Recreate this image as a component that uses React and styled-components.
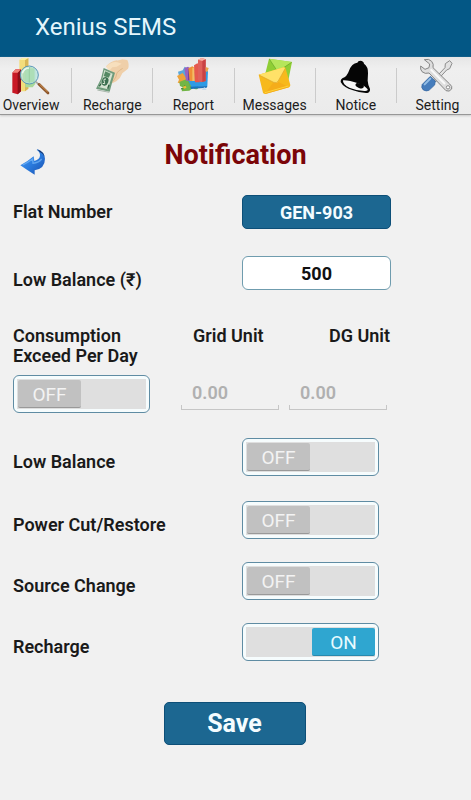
import { useState } from "react";
import styled, { createGlobalStyle } from "styled-components";

const GlobalStyle = createGlobalStyle`
    * {
        box-sizing: border-box;
    }
    body {
        margin: 0;
        min-height: 100vh;
        background-color: #f1f1f1;
        color: #1a1a1a;
        font-family: Roboto, "Noto Sans", sans-serif;
    }
    button, input {
        font-family: inherit;
    }
`
const Header = styled.header`
    display: flex;
    align-items: center;
    height: 57px;
    padding: 0 35px 4px;
    background-color: #035785;
`
const AppName = styled.span`
    color: #e4f6fc;
    font-size: 24px;
    line-height: 32px;
`
const NavBar = styled.nav`
    overflow: hidden;
    background: linear-gradient(#e6e6e6, #efefef 20%, #ebebeb);
    border-bottom: 1px solid #979797;
    box-shadow: 0 1px 2px #c9c9c9;
`
const TabList = styled.ul`
    display: flex;
    list-style: none;
    margin: 0 -7px 0 -9px;
    padding: 0;
`
const Tab = styled.li`
    display: flex;
    flex: 1 1 0;
    min-width: 0;
    align-items: center;

    &:not(:last-child)::after {
        content: "";
        width: 1px;
        height: 35px;
        background-color: #cbcbcb;
    }
`
const TabLink = styled.a`
    display: flex;
    flex: 1;
    flex-direction: column;
    align-items: center;
    height: 57px;
    padding-top: 1px;
    color: #1c1c1c;
    font-size: 14px;
    line-height: 18px;
    text-decoration: none;
`
const TabIcon = styled.svg`
    width: 40px;
    height: 38px;
    flex: none;
`
const TitleRow = styled.div`
    display: grid;
    grid-template-columns: 1fr auto 1fr;
    align-items: center;
    height: 80px;
    padding: 0 19px;
`
const BackButton = styled.button`
    width: 28px;
    height: 28px;
    margin-top: 14px;
    padding: 0;
    border: none;
    background: none;
    cursor: pointer;

    svg {
        display: block;
    }
`
const Title = styled.h1`
    margin: 0;
    color: #7b0508;
    font-size: 27px;
    font-weight: 700;
    line-height: 32px;
`
const Form = styled.form`
    padding-left: 13px;
`
const Row = styled.div`
    display: grid;
    grid-template-columns: 1fr 1fr;
    align-items: ${props => props.$align || "end"};
    margin-bottom: ${props => props.$gap}px;
`
const Label = styled.label`
    font-size: 18px;
    font-weight: 600;
    line-height: 20px;
    white-space: nowrap;
    padding-bottom: ${props => props.$raised ? 4 : 0}px;
`
const FlatButton = styled.button`
    width: 149px;
    height: 34px;
    padding: 0;
    border: 1px solid #0d4f78;
    border-radius: 5px;
    background-color: #1c6791;
    color: #f4fcff;
    font-size: 18px;
    font-weight: 700;
    cursor: pointer;
`
const BalanceInput = styled.input`
    width: 149px;
    height: 34px;
    padding: 0;
    border: 1px solid #6f9cae;
    border-radius: 6px;
    background-color: #fff;
    color: #111;
    font-size: 18px;
    font-weight: 700;
    text-align: center;
`
const UnitGrid = styled.div`
    display: grid;
    grid-template-columns: 168fr 108fr 182fr;
    row-gap: 9px;
    margin: 36px 0 25px;
`
const UnitLabel = styled(Label)`
    width: 101px;
    padding-left: ${props => props.$end ? 0 : 12}px;
    text-align: ${props => props.$end ? "right" : "left"};
`
const UnitInput = styled.input`
    width: 98px;
    height: 35px;
    padding: 0 11px;
    border: none;
    background:
        linear-gradient(#c6c6c6, #c6c6c6) left bottom / 100% 1px no-repeat,
        linear-gradient(#c6c6c6, #c6c6c6) left bottom / 1px 5px no-repeat,
        linear-gradient(#c6c6c6, #c6c6c6) right bottom / 1px 5px no-repeat;
    font-size: 18px;
    font-weight: 600;

    &::placeholder {
        color: #b0b0b0;
    }
`
const Frame = styled.label`
    display: flex;
    width: 137px;
    height: 38px;
    padding: 3px;
    border: 1px solid #5f8ca3;
    border-radius: 6px;
    background-color: #f6fcfd;
    cursor: pointer;
`
const Track = styled.span`
    display: flex;
    flex: 1;
    justify-content: ${props => props.$on ? "flex-end" : "flex-start"};
    padding: 1px 0 1px 1px;
    background-color: #dfdfdf;
`
const Thumb = styled.span`
    width: 63px;
    border-bottom: 1px solid ${props => props.$on ? "#2789ad" : "#999"};
    border-radius: 2px;
    background-color: ${props => props.$on ? "#2fa6d0" : "#c1c1c1"};
    color: ${props => props.$on ? "#e9fbff" : "#f3f3f3"};
    font-size: 19px;
    line-height: 30px;
    height: 28px;
    text-align: center;
`
const HiddenCheckbox = styled.input`
    appearance: none;
    width: 0;
    height: 0;
    margin: 0;
`
const SaveButton = styled.button`
    display: block;
    width: 142px;
    height: 43px;
    margin: 41px auto 0;
    padding: 0;
    border: 1px solid #0d4f78;
    border-radius: 5px;
    background-color: #1c6791;
    color: #f4fcff;
    font-size: 25px;
    font-weight: 700;
    cursor: pointer;
`
const SaveRow = styled.div`
    margin-left: -15px;
`

function OverviewIcon() {
    return (
        <TabIcon viewBox="33 12 120 114" aria-hidden="true">
            <path d="M58 18l9-6h18v92l-10 8H58z" fill="#f3dd7c" />
            <path d="M75 18l10-6v92l-10 8z" fill="#d9b757" />
            <path d="M58 18l9-6h18l-10 6z" fill="#fbf0a4" />
            <path d="M76 50l8-6h22v46l-8 10H76z" fill="#a8d99a" />
            <path d="M37 56l10-10h16v66l-10 9-16-5z" fill="#c81825" />
            <path d="M53 56l10-10v66l-10 9z" fill="#8d0d17" />
            <path d="M37 56l10-10h16l-10 10z" fill="#f08078" />
            <circle cx="88" cy="63" r="27" fill="#b9e3dc" fillOpacity=".8" stroke="#5c98b8" strokeWidth="3" />
            <path d="M69 46q14-14 34-3v40q-20 6-34-4z" fill="#a3d9a0" opacity=".5" />
            <path d="M88 39v47" stroke="#8cc795" strokeWidth="2" />
            <path d="M67 58q5-16 20-16" fill="none" stroke="#f5ffff" strokeWidth="5" opacity=".8" />
            <path d="M107 83l9 8" stroke="#a5a5a0" strokeWidth="5" />
            <path d="M117 91l27 26" stroke="#8b5429" strokeWidth="8" strokeLinecap="round" />
            <path d="M119 91l23 22" stroke="#d59a58" strokeWidth="3" strokeLinecap="round" />
        </TabIcon>
    )
}

function RechargeIcon() {
    return (
        <TabIcon viewBox="276 12 120 114" aria-hidden="true">
            <path d="M318 37q14-15 31-18 9 1 18-3l15 2q7 14 2 26l-17 14q-5 15-18 24l-12 6q-7-3-2-12l7-16-16-15z" fill="#efcfa9" />
            <path d="M318 38q18-17 34-13l13 4-15 9-13 2-9 10z" fill="#f7dfbd" />
            <path d="M339 82q11-12 12-26 8-8 17-13" fill="none" stroke="#d6ab79" strokeWidth="2" />
            <path d="M311 42l34 14-9 31-7 26-41-9 15-30z" fill="#6f9b7b" />
            <path d="M313 48l25 11-8 26-6 21-29-7 12-24z" fill="#d5e3d1" />
            <path d="M316 52l16 7-6 12-15-5z" fill="#558964" />
            <ellipse cx="315" cy="82" rx="10" ry="13" fill="#3c7050" transform="rotate(20 315 82)" />
            <path d="M318 75q-8-1-6 5t2 9l-6-1" fill="none" stroke="#e6efdf" strokeWidth="3" />
            <path d="M298 97l5-8m20 15l4-12" stroke="#2f6241" strokeWidth="4" />
            <path d="M292 108l36 7" stroke="#a8b6ab" strokeWidth="3" />
        </TabIcon>
    )
}

function ReportIcon() {
    return (
        <TabIcon viewBox="69 12 120 114" aria-hidden="true">
            <path d="M84 53l14-4 6-11 15 9-5 26-24 6z" fill="#5aa8db" />
            <path d="M81 66l17-9 11 16-6 18-20-5 4-9z" fill="#eda23b" />
            <path d="M88 84l22-9 38 7-5 23q-8 3-14-3l-11 8-23 2 3-12-8-4z" fill="#72b546" />
            <path d="M93 104q10 3 12-10" stroke="#3f8830" strokeWidth="4" fill="none" />
            <path d="M100 102l8-4" stroke="#f3b933" strokeWidth="7" />
            <path d="M112 75l8-20 54-4-2 46-47 3z" fill="#2d9be5" />
            <path d="M112 75l9 23 51-2-2 5-47 4z" fill="#1873bd" />
            <path d="M103 42l11-4 6 4v38h-12z" fill="#9a61bd" />
            <path d="M114 45l5-3v37h-5z" fill="#7440a1" />
            <path d="M115 43l12-6 7 4v40h-15z" fill="#ef9037" />
            <path d="M127 42l7-2v41h-7z" fill="#f4bd65" />
            <path d="M132 34l10-6 7 5v52h-14z" fill="#e5584e" />
            <path d="M144 17l11-5 12 4v65l-14 4-9-6z" fill="#df605b" />
            <path d="M144 17l11-5 12 4-10 5z" fill="#f8b1a4" />
            <path d="M157 21l10-5v65l-10 3z" fill="#c94345" />
            <path d="M167 39l9 3-4 12-5-2z" fill="#e8a54b" />
            <path d="M155 108l8-9 7 9z" fill="#c8dceb" />
        </TabIcon>
    )
}

function MessagesIcon() {
    return (
        <TabIcon viewBox="312 12 120 114" aria-hidden="true">
            <path d="M354 14l69 10-11 55-70-17z" fill="#8fce35" />
            <path d="M354 14l69 10-39 26q-6 2-9-4z" fill="#b5e65b" />
            <path d="M355 15l21 32q4 6 10 2l36-24" fill="none" stroke="#5fa323" strokeWidth="2" />
            <path d="M323 62l75-22q5 0 6 4l14 49q0 5-4 7l-71 20q-5 0-7-4z" fill="#f7b91c" />
            <path d="M343 118l29-39 42 21-71 20z" fill="#f5ad1a" />
            <path d="M323 62l75-22q4 0 4 4l-21 39q-4 6-11 3z" fill="#ffe168" />
            <path d="M324 63l44 22q9 3 13-3l22-39" fill="none" stroke="#dba02a" strokeWidth="2" />
            <path d="M342 116l70-20" stroke="#ffd33b" strokeWidth="3" />
        </TabIcon>
    )
}

function NoticeIcon() {
    return (
        <TabIcon viewBox="315 24 120 114" aria-hidden="true">
            <path d="M379 38q2-6 9-6 10 1 11 9 13 9 12 29l-1 22q1 14 7 25 1 9-8 12-19 1-43-8-29-9-37-25-1-7 5-11 14-5 20-23 8-22 25-24z" fill="#050505" />
            <path d="M336 91q17-1 45 9 22 8 29 18 1 6-10 5-21 0-43-9-23-10-21-23z" fill="#f7f7f7" />
            <ellipse cx="386" cy="107" rx="13" ry="7" fill="#050505" transform="rotate(18 386 107)" />
        </TabIcon>
    )
}

function SettingIcon() {
    return (
        <TabIcon viewBox="561 24 120 114" aria-hidden="true">
            <path d="M659 32l7 8-7 16-9 4-32 35-7-6 34-36 1-12z" fill="#e2e2e2" stroke="#8c8c8c" strokeWidth="3" />
            <path d="M601 79l15 14-2 12-17 16q-8 4-17-1-8-7-3-17z" fill="#467dbc" stroke="#2e609b" strokeWidth="2" />
            <path d="M584 103l17-17" stroke="#94bfe6" strokeWidth="6" strokeLinecap="round" />
            <path d="M583 29q14-4 22 5 7 8 4 19l50 49q9 7 6 15-7 10-17 5L597 69q-12 4-21-4-6-7-4-17l13 10 12-5 2-11z" fill="#dedede" stroke="#858585" strokeWidth="3" strokeLinejoin="round" />
            <path d="M602 58l43 44" stroke="#fafafa" strokeWidth="6" />
            <circle cx="654" cy="112" r="5" fill="#fff" stroke="#8c8c8c" strokeWidth="3" />
        </TabIcon>
    )
}

function BackIcon() {
    return (
        <svg width="28" height="28" viewBox="57 51 84 84" aria-hidden="true">
            <defs>
                <linearGradient id="arrowBlue" x1="0" y1="0" x2="1" y2="1">
                    <stop offset="0" stopColor="#4f9df0" />
                    <stop offset=".5" stopColor="#2b7de0" />
                    <stop offset="1" stopColor="#1a4fae" />
                </linearGradient>
            </defs>
            <path d="M112 55q21 7 23 28 0 29-31 35v13q-22-13-43-28 20-10 40-27l2 14q17-4 17-17 0-10-10-16z" fill="url(#arrowBlue)" />
            <path d="M112 55q21 7 23 28-4-16-16-20z" fill="#17366e" />
            <path d="M68 102q16-8 30-18l1 13q18-2 26-13" fill="none" stroke="#76b8fa" strokeWidth="4" opacity=".7" />
        </svg>
    )
}

const tabs = [
    { name: "Overview", Icon: OverviewIcon },
    { name: "Recharge", Icon: RechargeIcon },
    { name: "Report", Icon: ReportIcon },
    { name: "Messages", Icon: MessagesIcon },
    { name: "Notice", Icon: NoticeIcon },
    { name: "Setting", Icon: SettingIcon },
]

const alerts = [
    { id: "lowBalance", name: "Low Balance", gap: 25 },
    { id: "powerCut", name: "Power Cut/Restore", gap: 23 },
    { id: "sourceChange", name: "Source Change", gap: 23 },
    { id: "recharge", name: "Recharge", gap: 0 },
]

function Toggle({ id, on, onChange }) {
    return (
        <Frame>
            <HiddenCheckbox type="checkbox" id={id} checked={on} onChange={onChange} />
            <Track $on={on}>
                <Thumb $on={on}>{on ? "ON" : "OFF"}</Thumb>
            </Track>
        </Frame>
    )
}

export default function App() {
    const [balance, setBalance] = useState("500")
    const [settings, setSettings] = useState({
        consumption: false,
        lowBalance: false,
        powerCut: false,
        sourceChange: false,
        recharge: true,
    })

    const toggle = (id) => {
        setSettings({ ...settings, [id]: !settings[id] })
    }

    return (
        <>
            <GlobalStyle />
            <Header>
                <AppName>Xenius SEMS</AppName>
            </Header>
            <NavBar>
                <TabList>
                    {tabs.map(({ name, Icon }) => (
                        <Tab key={name}>
                            <TabLink href={"#" + name.toLowerCase()}>
                                <Icon />
                                {name}
                            </TabLink>
                        </Tab>
                    ))}
                </TabList>
            </NavBar>
            <main>
                <TitleRow>
                    <BackButton type="button" aria-label="Back">
                        <BackIcon />
                    </BackButton>
                    <Title>Notification</Title>
                </TitleRow>
                <Form onSubmit={(e) => e.preventDefault()}>
                    <Row $align="center" $gap={27}>
                        <Label htmlFor="flat">Flat Number</Label>
                        <FlatButton type="button" id="flat">GEN-903</FlatButton>
                    </Row>
                    <Row $gap={0}>
                        <Label htmlFor="balance">Low Balance (₹)</Label>
                        <BalanceInput id="balance" value={balance} onChange={(e) => setBalance(e.target.value)} />
                    </Row>
                    <UnitGrid>
                        <Label htmlFor="consumption">Consumption<br />Exceed Per Day</Label>
                        <UnitLabel htmlFor="gridUnit">Grid Unit</UnitLabel>
                        <UnitLabel htmlFor="dgUnit" $end>DG Unit</UnitLabel>
                        <Toggle id="consumption" on={settings.consumption} onChange={() => toggle("consumption")} />
                        <UnitInput id="gridUnit" placeholder="0.00" />
                        <UnitInput id="dgUnit" placeholder="0.00" />
                    </UnitGrid>
                    {alerts.map(({ id, name, gap }) => (
                        <Row key={id} $gap={gap}>
                            <Label htmlFor={id} $raised>{name}</Label>
                            <Toggle id={id} on={settings[id]} onChange={() => toggle(id)} />
                        </Row>
                    ))}
                    <SaveRow>
                        <SaveButton type="submit">Save</SaveButton>
                    </SaveRow>
                </Form>
            </main>
        </>
    )
}
